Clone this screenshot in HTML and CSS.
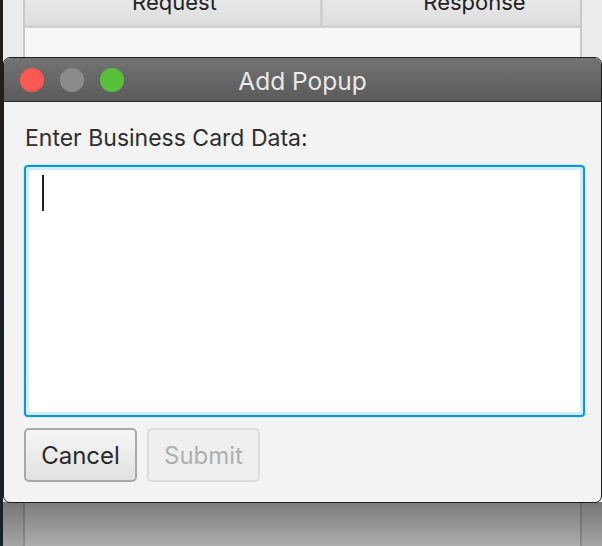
FILE: index.html
```html
<!DOCTYPE html>
<html>
<head>
<meta charset="utf-8">
<link rel="stylesheet" href="styles.css">
</head>
<body>
<div class="screen">
  <div class="edge"></div>
  <div class="app">
    <div class="table">
      <div class="thead">
        <div class="th th-req">Request</div>
        <div class="th th-res">Response</div>
      </div>
      <div class="tbody"></div>
    </div>
  </div>
  <div class="shade"></div>
  <div class="dialog">
    <div class="titlebar">
      <div class="lights">
        <span class="light red"></span>
        <span class="light gray"></span>
        <span class="light green"></span>
      </div>
      <div class="title">Add Popup</div>
    </div>
    <div class="content">
      <div class="label">Enter Business Card Data:</div>
      <div class="textarea"><span class="caret"></span></div>
      <div class="buttons">
        <button class="btn btn-cancel">Cancel</button>
        <button class="btn btn-submit" disabled>Submit</button>
      </div>
    </div>
  </div>
</div>
</body>
</html>
```
FILE: styles.css
```css
* { box-sizing: border-box; }
html, body { margin: 0; padding: 0; }
body {
  width: 602px;
  height: 546px;
  overflow: hidden;
  font-family: "Inter", "Liberation Sans", sans-serif;
}
.screen {
  position: relative;
  width: 602px;
  height: 546px;
  display: flex;
  overflow: hidden;
}
.edge {
  width: 3px;
  flex: none;
  background: linear-gradient(#231d18, #18202c);
}
.app {
  flex: 1;
  background: #ececec;
  padding-left: 20px;
  padding-right: 20px;
  margin-top: -11px;
  height: 557px;
}
.table {
  width: 559px;
  height: 100%;
  border-left: 2px solid #c8c8c8;
  border-right: 2px solid #c8c8c8;
  display: flex;
  flex-direction: column;
}
.thead {
  display: flex;
  height: 39px;
  border-bottom: 3px solid #d2d2d2;
  background: linear-gradient(#eeeeee, #dddddd);
}
.th {
  font-size: 22px;
  color: #222;
  text-align: center;
  line-height: 26px;
}
.th-req { width: 298px; border-right: 3px solid #d0d0d0; padding-left: 4px; }
.th-res { flex: 1; padding-left: 46px; }
.tbody {
  flex: 1;
  background: #f7f7f7;
}
.shade {
  position: absolute;
  left: 3px;
  right: 0;
  top: 502px;
  bottom: 0;
  background: linear-gradient(rgba(0,0,0,0.5), rgba(0,0,0,0.3));
}
.dialog {
  position: absolute;
  left: 3px;
  top: 57px;
  width: 599px;
  height: 446px;
  border: 1px solid #1e1e1e;
  border-radius: 7px;
  background: #f3f3f3;
  overflow: hidden;
  display: flex;
  flex-direction: column;
}
.titlebar {
  position: relative;
  height: 44px;
  flex: none;
  background: linear-gradient(#737373, #5b5b5b);
  border-bottom: 1px solid #2a2a2a;
  display: flex;
  align-items: center;
  justify-content: center;
}
.lights {
  position: absolute;
  left: 16px;
  top: 10px;
  display: flex;
  gap: 16px;
}
.light {
  width: 24px;
  height: 24px;
  border-radius: 50%;
  display: block;
}
.red { background: #fc5753; }
.gray { background: #8b8b8b; }
.green { background: #57c139; }
.title {
  color: #e9e9e9;
  font-size: 24.5px;
  line-height: 30px;
  margin-top: 2px;
}
.content {
  flex: 1;
  padding: 23px 16px 0 20px;
  display: flex;
  flex-direction: column;
}
.label {
  font-size: 23px;
  line-height: 27px;
  color: #2e2e2e;
  margin-left: 1px;
}
.textarea {
  margin-top: 13px;
  height: 252px;
  background: #fff;
  border: 2px solid #0c9ad4;
  border-radius: 4px;
  box-shadow: inset 0 0 0 3px #d3ecf9, 0 0 0 1px #cfe9f6;
  padding: 8px 0 0 16px;
}
.caret {
  display: block;
  width: 2px;
  height: 36px;
  background: #222;
}
.buttons {
  margin-top: 11px;
  display: flex;
  gap: 10px;
}
.btn {
  width: 113px;
  height: 54px;
  font-family: "Inter", "Liberation Sans", sans-serif;
  font-size: 24px;
  border-radius: 5px;
  padding: 0;
}
.btn-cancel {
  color: #2a2a2a;
  border: 2px solid #a9a9a9;
  background: linear-gradient(#f6f6f6, #e1e1e1);
}
.btn-submit {
  color: #afafaf;
  border: 2px solid #dcdcdc;
  background: #efefef;
}
```
